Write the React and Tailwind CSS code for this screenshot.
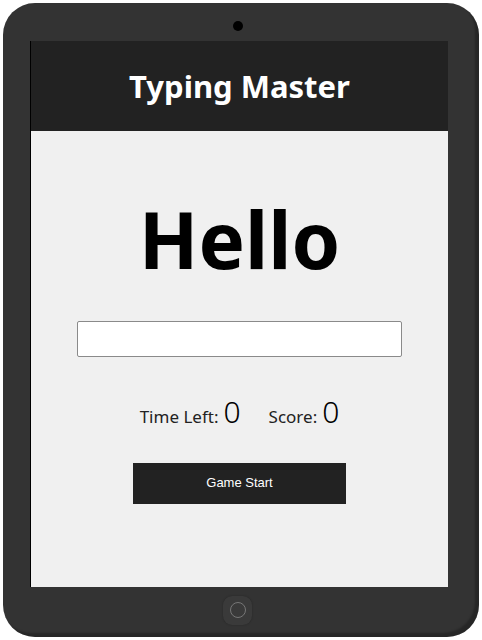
export default function App() {
  return (
    <div className="w-[482px] h-[640px] bg-white pt-[3px] pl-[3px]">
      <div className="w-[476px] h-[634px] rounded-[32px] bg-[#333333] shadow-[inset_-4px_-4px_2px_rgba(0,0,0,0.25)] flex flex-col">
        <div className="h-[38px] flex justify-center pr-[6px]">
          <div className="mt-[18px] w-[10px] h-[10px] rounded-full bg-black" />
        </div>
        <div className="ml-[27px] w-[418px] h-[546px] border-l border-black flex flex-col">
          <div className="h-[90px] bg-[#222222] flex items-center justify-center">
            <h1 className="text-white font-bold text-[31px] leading-none font-['Noto_Sans',sans-serif]">Typing Master</h1>
          </div>
          <div className="flex-1 bg-[#f0f0f0] flex flex-col items-center font-['Noto_Sans',sans-serif]">
            <div className="mt-[69px] h-[78px] text-[78px] leading-[78px] font-bold text-black">Hello</div>
            <input className="mt-[43px] w-[325px] h-[36px] bg-white border border-[#8a8a8a] rounded-[2px] outline-none" />
            <div className="mt-[38px] flex items-baseline text-black">
              <span className="text-[17px] text-[#222]">Time Left:</span>
              <span className="ml-[5px] text-[30px] leading-[34px] font-light">0</span>
              <span className="ml-[28px] text-[17px] text-[#222]">Score:</span>
              <span className="ml-[5px] text-[30px] leading-[34px] font-light">0</span>
            </div>
            <button className="mt-[33px] w-[213px] h-[41px] bg-[#222222] text-white text-[13px] font-['Liberation_Sans',sans-serif]">Game Start</button>
          </div>
        </div>
        <div className="flex-1 flex items-center justify-center pr-[7px] pb-[4px]">
          <div className="w-[29px] h-[29px] rounded-[9px] bg-[#3a3a3a] flex items-center justify-center shadow-[0_0_2px_rgba(0,0,0,0.3)]">
            <div className="w-[16px] h-[16px] rounded-full border border-[#777]" />
          </div>
        </div>
      </div>
    </div>
  );
}
